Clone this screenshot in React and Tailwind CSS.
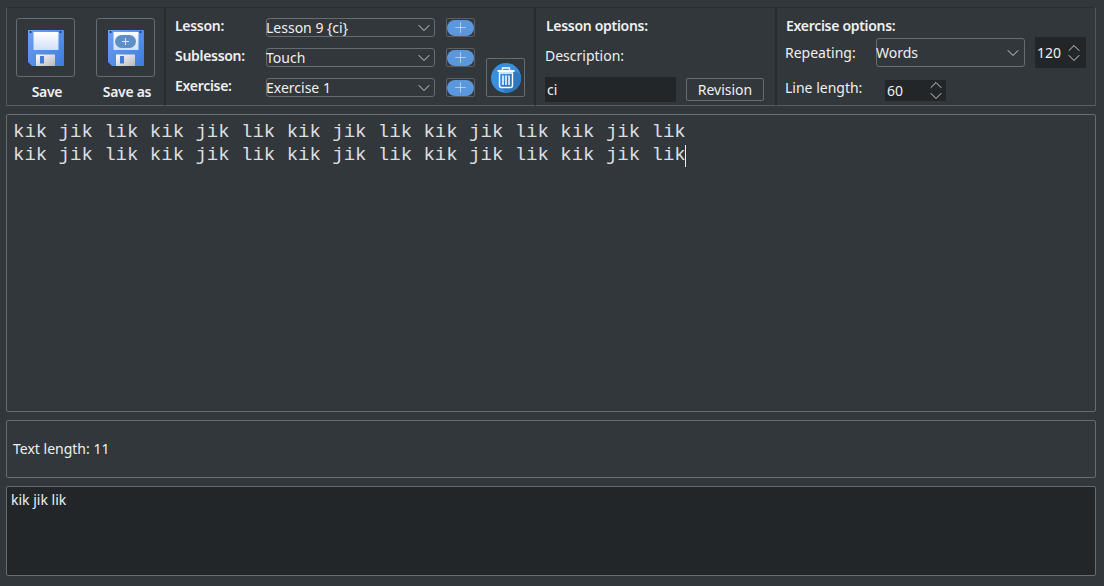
import React from 'react';
import { ChevronDown, ChevronUp, Plus } from 'lucide-react';

const uiFont = { fontFamily: '"Noto Sans", sans-serif' };

const Floppy = ({ saveAs }) => {
  const id = saveAs ? 'as' : 'plain';
  return (
    <svg width="36" height="36" viewBox="0 0 36 36">
      <defs>
        <linearGradient id={`body-${id}`} x1="0" y1="0" x2="1" y2="1">
          <stop offset="0" stopColor="#6aa2f0" />
          <stop offset="1" stopColor="#3f7ce0" />
        </linearGradient>
        <linearGradient id={`label-${id}`} x1="0" y1="0" x2="0" y2="1">
          <stop offset="0" stopColor="#ffffff" />
          <stop offset="1" stopColor="#d0dff7" />
        </linearGradient>
        <linearGradient id={`shutter-${id}`} x1="0" y1="0" x2="1" y2="1">
          <stop offset="0" stopColor="#ffffff" />
          <stop offset="1" stopColor="#b4b8be" />
        </linearGradient>
      </defs>
      <path d="M0 0h35a1 1 0 0 1 1 1v34a1 1 0 0 1-1 1H4l-4-4z" fill={`url(#body-${id})`} />
      <circle cx="2.500" cy="2" r="1" fill="#16305c" />
      <circle cx="32.500" cy="2" r="1" fill="#16305c" />
      <rect x="5.500" y="2" width="25" height="18" fill={`url(#label-${id})`} />
      {saveAs && (
        <>
          <rect x="7" y="5" width="21" height="13" rx="6.500" fill="#5d8fc9" />
          <path d="M17.500 8v7M14 11.500h7" stroke="#dbe8f7" strokeWidth="1" />
        </>
      )}
      <path d="M8 36v-11.500h19v11.500z" fill={`url(#shutter-${id})`} />
      <rect x="12" y="26" width="4" height="7.500" fill="#3f7ce0" />
    </svg>
  );
};

const TrashIcon = () => (
  <svg width="30" height="30" viewBox="0 0 30 30">
    <circle cx="15" cy="15" r="15" fill="#3a8fdc" />
    <path d="M15 30a15 15 0 0 0 15-15 15 15 0 0 0-.6-4L21 7l-11 17z" fill="#2f78bf" />
    <path d="M11.500 7V5h7v2" fill="none" stroke="#fff" strokeWidth="1.400" />
    <rect x="6.500" y="7" width="17" height="2" rx="0.500" fill="#fff" />
    <path d="M8.500 10h13v12.500a2 2 0 0 1-2 2h-9a2 2 0 0 1-2-2z" fill="none" stroke="#fff" strokeWidth="1.400" />
    <path d="M12 12.500v9.500M15 12.500v9.500M18 12.500v9.500" stroke="#fff" strokeWidth="1.500" />
  </svg>
);

const Combo = ({ text, className }) => (
  <div className={`flex items-center justify-between border border-[#686c70] rounded-[3px] text-[14px] text-[#eff0f1] ${className}`}>
    <span className="leading-none -ml-[1px]">{text}</span>
    <ChevronDown size={20} strokeWidth={1} color="#eff0f1" />
  </div>
);

const PlusButton = () => (
  <div className="w-[29px] h-[19px] border border-[#5b5f63] rounded-[2px] flex items-center justify-center">
    <div className="w-[27px] h-[16px] rounded-full bg-[#5a97dc] flex items-center justify-center">
      <Plus size={17} strokeWidth={0.8} color="#eef4fb" />
    </div>
  </div>
);

const Spin = ({ value, className, gap, right }) => (
  <div className={`flex items-center justify-between bg-[#232629] text-[14px] text-[#eff0f1] ${className}`}>
    <span className="pl-[2px]">{value}</span>
    <div className={`flex flex-col items-center ${gap} ${right}`}>
      <ChevronUp size={20} strokeWidth={1} color="#eff0f1" className="-my-[5px]" />
      <ChevronDown size={20} strokeWidth={1} color="#eff0f1" className="-my-[5px]" />
    </div>
  </div>
);

const panel = 'h-[99px] border-b border-l border-r border-t border-t-[#2a2e32] border-b-[#5b5f63] border-l-[#282c30] border-r-[#282c30]';
const heading = 'font-semibold tracking-[-0.3px]';

export default function App() {
  return (
    <div style={uiFont} className="w-[1104px] h-[586px] bg-[#32373b] text-[#eff0f1] text-[14px] overflow-hidden pt-[7px] px-[6px]">
      <div className="flex h-[99px]">
        {/* save buttons */}
        <div className={`${panel} border-l-[#53575b] w-[159px] pl-[9px] pt-[10px]`}>
          <div className="flex gap-[21px]">
            <div className="w-[59px] flex flex-col items-center">
              <div className="w-[59px] h-[59px] border border-[#686c70] rounded-[3px] flex items-center justify-center">
                <Floppy />
              </div>
              <span className={`${heading} mt-[5px] pl-[3px] leading-[20px]`}>Save</span>
            </div>
            <div className="w-[59px] flex flex-col items-center">
              <div className="w-[59px] h-[59px] border border-[#686c70] rounded-[3px] flex items-center justify-center">
                <Floppy saveAs />
              </div>
              <span className={`${heading} mt-[5px] pl-[3px] leading-[20px]`}>Save as</span>
            </div>
          </div>
        </div>

        {/* lesson */}
        <div className={`${panel} w-[370px] flex pl-[9px] pt-[10px]`}>
          <div className={`${heading} flex flex-col gap-[11px] w-[91px] leading-[19px] -mt-[2px]`}>
            <span>Lesson:</span>
            <span>Sublesson:</span>
            <span>Exercise:</span>
          </div>
          <div className="flex flex-col gap-[11px]">
            <Combo text="Lesson 9 {ci}" className="w-[169px] h-[19px]" />
            <Combo text="Touch" className="w-[169px] h-[19px]" />
            <Combo text="Exercise 1" className="w-[169px] h-[19px]" />
          </div>
          <div className="flex flex-col gap-[11px] ml-[11px]">
            <PlusButton />
            <PlusButton />
            <PlusButton />
          </div>
          <div className="ml-[11px] mt-[40px] w-[39px] h-[39px] border border-[#686c70] rounded-[2px] flex items-center justify-center">
            <TrashIcon />
          </div>
        </div>

        {/* lesson options */}
        <div className={`${panel} w-[241px] pl-[9px] pt-[8px]`}>
          <div className={`${heading} leading-[20px] pl-[1px]`}>Lesson options:</div>
          <div className="mt-[10px] leading-[20px]">Description:</div>
          <div className="flex items-center mt-[11px]">
            <div className="w-[131px] h-[25px] bg-[#232629] pl-[2px] leading-[25px]">ci</div>
            <div className="ml-[10px] w-[78px] h-[23px] border border-[#686c70] rounded-[2px] flex items-center justify-center">Revision</div>
          </div>
        </div>

        {/* exercise options */}
        <div className={`${panel} border-r-[#53575b] w-[320px] pl-[9px] pt-[8px]`}>
          <div className={`${heading} leading-[20px]`}>Exercise options:</div>
          <div className="flex items-center mt-[1px]">
            <span className="w-[90px] -ml-[1px] mr-[1px]">Repeating:</span>
            <Combo text="Words" className="w-[149px] h-[29px] pr-[1px]" />
            <Spin value="120" className="w-[51px] h-[31px] ml-[10px]" right="mr-[2px]" />
          </div>
          <div className="flex items-center mt-[9px]">
            <span className="w-[99px] -ml-[1px] mr-[1px] mb-[5px]">Line length:</span>
            <Spin value="60" className="w-[61px] h-[21px]" gap="gap-[1px]" />
          </div>
        </div>
      </div>

      <div className="mt-[8px] w-[1090px] h-[298px] border border-[#686c70] rounded-[2px] pl-[6px] pt-[6px] text-[#dcdee0] text-[19px] leading-[23px]" style={{ fontFamily: '"Liberation Mono", monospace' }}>
        <div>kik jik lik kik jik lik kik jik lik kik jik lik kik jik lik</div>
        <div className="flex items-center">
          <span>kik jik lik kik jik lik kik jik lik kik jik lik kik jik lik</span>
          <span className="w-[1px] h-[22px] -ml-[1px] bg-[#eff0f1]" />
        </div>
      </div>

      <div className="mt-[8px] w-[1090px] h-[58px] border border-[#686c70] rounded-[2px] pl-[6px] pb-[2px] flex items-center">
        Text length: 11
      </div>

      <div className="mt-[8px] w-[1090px] h-[90px] border border-[#686c70] rounded-[2px] bg-[#232629] pl-[4px] pt-[3px] leading-[20px]">
        kik jik lik
      </div>
    </div>
  );
}
